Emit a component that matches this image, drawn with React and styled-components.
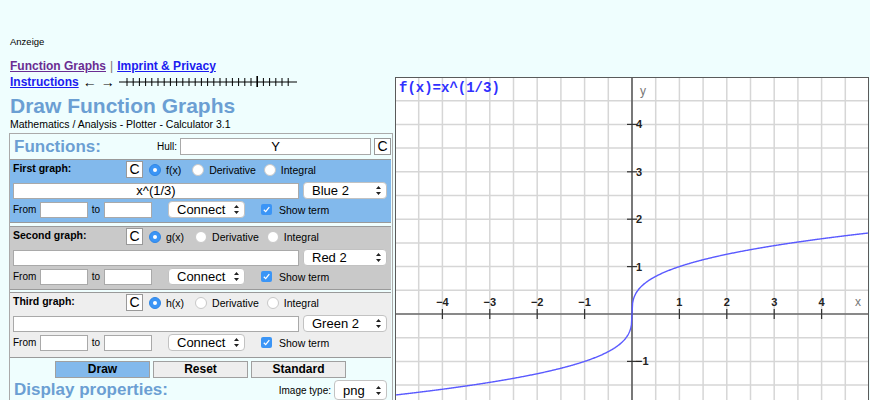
import React from 'react';
import styled, { createGlobalStyle } from 'styled-components';

const GlobalStyle = createGlobalStyle`
  body {
    margin: 0;
    background: #effefe;
    font-family: "Liberation Sans", Arial, sans-serif;
    color: #000;
  }
`;

const Page = styled.div`
  display: flex;
  align-items: flex-start;
  padding: 36px 0 0 9px;
  height: 400px;
  box-sizing: border-box;
  overflow: hidden;
`;

const LeftCol = styled.div`
  width: 384px;
  flex: none;
`;

const AdLabel = styled.div`
  font-size: 9.5px;
  line-height: 12px;
  padding-left: 1px;
`;

const NavRow = styled.div`
  display: flex;
  align-items: center;
  gap: 4px;
  height: 16px;
  margin-top: ${p => p.$top || 0}px;
  padding-left: 1px;
  font-size: 12px;
  font-weight: bold;
`;

const NavLink = styled.a`
  color: ${p => (p.$visited ? '#6a2c92' : '#1b1bf0')};
  text-decoration: underline;
`;

const Sep = styled.span`
  color: #777;
  font-weight: normal;
`;

const Arrow = styled.span`
  font-weight: normal;
  font-size: 14px;
  line-height: 14px;
`;

const Title = styled.h1`
  margin: 4px 0 0 1px;
  font-size: 21px;
  line-height: 24px;
  color: #6b9fd3;
`;

const Subtitle = styled.div`
  font-size: 10.5px;
  line-height: 13px;
  padding-left: 1px;
`;

const Panel = styled.div`
  margin-top: 2px;
  border: 1px solid #aaa;
  border-bottom: none;
`;

const HeadRow = styled.div`
  display: flex;
  align-items: center;
  height: 25px;
  padding: 0 1px 0 4px;
`;

const SectionTitle = styled.div`
  font-size: 17px;
  font-weight: bold;
  color: #6b9fd3;
  flex: 1;
`;

const SmallLabel = styled.span`
  font-size: ${p => p.$size || 10.5}px;
  width: ${p => (p.$w ? p.$w + 'px' : 'auto')};
  text-align: ${p => (p.$center ? 'center' : 'left')};
  margin-right: ${p => p.$mr || 0}px;
  flex: none;
`;

const TextField = styled.div`
  width: ${p => p.$w}px;
  height: ${p => p.$h || 16}px;
  box-sizing: border-box;
  background: #fff;
  border: 1px solid #a9a9a9;
  font-size: 13px;
  line-height: ${p => (p.$h || 16) - 2}px;
  text-align: center;
  flex: none;
`;

const CButton = styled.div`
  width: 17px;
  height: 17px;
  box-sizing: border-box;
  background: #fff;
  border: 1px solid #999;
  font-size: 14px;
  line-height: 15px;
  text-align: center;
  margin-left: ${p => p.$ml || 0}px;
  flex: none;
`;

const Box = styled.div`
  background: ${p => p.$bg};
  border-top: 1px solid #9a9a9a;
  border-bottom: 1px solid #9a9a9a;
  margin: ${p => p.$mt}px 1px 0 0;
  padding: 1px 0 ${p => p.$pb}px 3px;
  display: flex;
  flex-direction: column;
  gap: 2px;
`;

const BoxRow = styled.div`
  display: flex;
  align-items: ${p => (p.$top ? 'flex-start' : 'center')};
  height: ${p => p.$h || 17}px;
`;

const BoxTitle = styled.div`
  width: 113px;
  font-size: 10.5px;
  font-weight: bold;
  padding-top: 1px;
`;

const RadioGroup = styled.div`
  display: flex;
  align-items: center;
  margin-top: 3px;
  font-size: 10.5px;
`;

const RadioDot = styled.span`
  width: 12px;
  height: 12px;
  box-sizing: border-box;
  border-radius: 50%;
  background: ${p => (p.$on ? '#3b95f6' : '#fff')};
  border: 1px solid ${p => (p.$on ? '#2f86e6' : '#c8c8c8')};
  margin: 0 5px 0 ${p => p.$ml}px;
  display: flex;
  align-items: center;
  justify-content: center;
  &::after {
    content: '';
    width: 4px;
    height: 4px;
    border-radius: 50%;
    background: ${p => (p.$on ? '#fff' : 'transparent')};
  }
`;

const SelectBox = styled.div`
  width: ${p => p.$w}px;
  height: ${p => p.$h || 17}px;
  box-sizing: border-box;
  margin-left: ${p => p.$ml || 0}px;
  background: #fff;
  border: 1px solid #c2c2c2;
  border-radius: 4px;
  display: flex;
  align-items: center;
  justify-content: space-between;
  padding: 0 4px 0 ${p => p.$pl || 8}px;
  font-size: 13px;
  flex: none;
`;

const CheckBox = styled.span`
  width: 11px;
  height: 11px;
  border-radius: 2px;
  background: #3b95f6;
  margin: 0 7px 0 ${p => p.$ml}px;
  display: flex;
  align-items: center;
  justify-content: center;
  flex: none;
`;

const ButtonRow = styled.div`
  display: flex;
  gap: 3px;
  padding: 3px 0 0 45px;
`;

const ActionButton = styled.div`
  width: 95px;
  height: 17px;
  box-sizing: border-box;
  border: 1px solid #a0a0a0;
  background: ${p => (p.$primary ? '#82b9ec' : '#eeeeee')};
  font-size: 12px;
  font-weight: bold;
  line-height: 15px;
  text-align: center;
`;

const FootRow = styled.div`
  display: flex;
  align-items: center;
  height: 22px;
  padding: 1px 5px 0 4px;
`;

const GraphFrame = styled.div`
  margin: 41px 0 0 2px;
  flex: none;
`;

function Arrows() {
  return (
    <svg width="7" height="11" viewBox="0 0 7 11">
      <path d="M3.5 1 L6 4 H1 Z M3.5 10 L6 7 H1 Z" fill="#222" />
    </svg>
  );
}

function Check() {
  return (
    <svg width="9" height="9" viewBox="0 0 9 9">
      <path d="M1.8 4.8 L3.7 6.6 L7.3 2.2" stroke="#fff" strokeWidth="1.3" fill="none" />
    </svg>
  );
}

function Ruler() {
  const ticks = [];
  for (let i = 0; i < 27; i++) {
    const x = 8 + i * 6.2;
    const big = i === 21;
    ticks.push(<line key={i} x1={x} x2={x} y1={big ? 0 : 2} y2={big ? 11 : 10} stroke="#000" strokeWidth={big ? 1.6 : 1} />);
  }
  return (
    <svg width="180" height="12" viewBox="0 0 180 12">
      <line x1="0" x2="178" y1="6" y2="6" stroke="#000" strokeWidth="1" />
      {ticks}
    </svg>
  );
}

function GraphBox({ bg, mt, pb, title, fn, value, color }) {
  return (
    <Box $bg={bg} $mt={mt} $pb={pb}>
      <BoxRow $top $h={19}>
        <BoxTitle>{title}</BoxTitle>
        <CButton>C</CButton>
        <RadioGroup>
          <RadioDot $on $ml={6} />
          <span>{fn}</span>
          <RadioDot $ml={11} />
          <span>Derivative</span>
          <RadioDot $ml={8} />
          <span>Integral</span>
        </RadioGroup>
      </BoxRow>
      <BoxRow>
        <TextField $w={286}>{value}</TextField>
        <SelectBox $w={84} $ml={4}>
          <span>{color}</span>
          <Arrows />
        </SelectBox>
      </BoxRow>
      <BoxRow>
        <SmallLabel $size={10} $w={27}>From</SmallLabel>
        <TextField $w={48} $h={16} />
        <SmallLabel $size={10} $w={16} $center>to</SmallLabel>
        <TextField $w={48} $h={16} />
        <SelectBox $w={77} $ml={16} $h={17}>
          <span>Connect</span>
          <Arrows />
        </SelectBox>
        <CheckBox $ml={16}><Check /></CheckBox>
        <SmallLabel>Show term</SmallLabel>
      </BoxRow>
    </Box>
  );
}

const W = 474;
const U = 47.4;
const C = 237;
const FONT = 'Liberation Sans, Arial, sans-serif';

function Graph() {
  const grid = [];
  for (let i = 1; i < 20; i++) {
    const p = i * 23.7;
    grid.push(<line key={'v' + i} x1={p} x2={p} y1="0" y2={W} stroke="#d6d6d6" strokeWidth="1.5" />);
    grid.push(<line key={'h' + i} x1="0" x2={W} y1={p} y2={p} stroke="#d6d6d6" strokeWidth="1.5" />);
  }
  const pts = [];
  for (let i = 0; i <= 800; i++) {
    const x = -5 + i * 0.0125;
    pts.push(`${(C + x * U).toFixed(2)},${(C - Math.cbrt(x) * U).toFixed(2)}`);
  }
  const nums = [-4, -3, -2, -1, 1, 2, 3, 4];
  const label = n => (n < 0 ? '\u2212' + -n : String(n));
  return (
    <svg width={W} height={W} viewBox={`0 0 ${W} ${W}`} style={{ display: 'block', background: '#fff' }}>
      {grid}
      <line x1="0" x2={W} y1={C} y2={C} stroke="#333" strokeWidth="1.2" />
      <line x1={C} x2={C} y1="0" y2={W} stroke="#333" strokeWidth="1.2" />
      {nums.map(n => (
        <g key={n}>
          <line x1={C + n * U} x2={C + n * U} y1={C - 5} y2={C + 5} stroke="#333" strokeWidth="1.2" />
          <text x={C + n * U} y={C - 8} fontSize="11" fontWeight="bold" textAnchor="middle" fontFamily={FONT} fill="#222">{label(n)}</text>
          <line x1={C - 5} x2={C + 5} y1={C - n * U} y2={C - n * U} stroke="#333" strokeWidth="1.2" />
          {n >= -1 && (
            <text x={C + 4} y={C - n * U + 4} fontSize="11" fontWeight="bold" fontFamily={FONT} fill="#222">{label(n)}</text>
          )}
        </g>
      ))}
      <text x={C + 8} y="18" fontSize="12" fill="#777" fontFamily={FONT}>y</text>
      <text x={C + 223} y={C - 8} fontSize="12" fill="#777" fontFamily={FONT}>x</text>
      <polyline points={pts.join(' ')} fill="none" stroke="#5a5aff" strokeWidth="1.4" />
      <text x="4" y="15" fontSize="14" fontWeight="bold" fill="#3030ff" fontFamily="Liberation Mono, monospace">f(x)=x^(1/3)</text>
      <rect x="0.5" y="0.5" width={W - 1} height={W - 1} fill="none" stroke="#5a5a5a" strokeWidth="1" />
    </svg>
  );
}

export default function App() {
  return (
    <>
      <GlobalStyle />
      <Page>
        <LeftCol>
          <AdLabel>Anzeige</AdLabel>
          <NavRow $top={10}>
            <NavLink $visited href="#">Function Graphs</NavLink>
            <Sep>|</Sep>
            <NavLink href="#">Imprint &amp; Privacy</NavLink>
          </NavRow>
          <NavRow>
            <NavLink href="#">Instructions</NavLink>
            <Arrow>&larr;</Arrow>
            <Arrow>&rarr;</Arrow>
            <Ruler />
          </NavRow>
          <Title>Draw Function Graphs</Title>
          <Subtitle>Mathematics / Analysis - Plotter - Calculator 3.1</Subtitle>
          <Panel>
            <HeadRow>
              <SectionTitle>Functions:</SectionTitle>
              <SmallLabel $size={10} $mr={3}>Hull:</SmallLabel>
              <TextField $w={191} $h={17}>Y</TextField>
              <CButton $ml={3}>C</CButton>
            </HeadRow>
            <GraphBox bg="#82b9ec" mt={0} pb={4} title="First graph:" fn="f(x)" value="x^(1/3)" color="Blue 2" />
            <GraphBox bg="#c9c9c9" mt={3} pb={4} title="Second graph:" fn="g(x)" value="" color="Red 2" />
            <GraphBox bg="#eeeeee" mt={2} pb={6} title="Third graph:" fn="h(x)" value="" color="Green 2" />
            <ButtonRow>
              <ActionButton $primary>Draw</ActionButton>
              <ActionButton>Reset</ActionButton>
              <ActionButton>Standard</ActionButton>
            </ButtonRow>
            <FootRow>
              <SectionTitle>Display properties:</SectionTitle>
              <SmallLabel $size={10} $mr={3}>Image type:</SmallLabel>
              <SelectBox $w={53} $h={20}>
                <span>png</span>
                <Arrows />
              </SelectBox>
            </FootRow>
          </Panel>
        </LeftCol>
        <GraphFrame>
          <Graph />
        </GraphFrame>
      </Page>
    </>
  );
}
